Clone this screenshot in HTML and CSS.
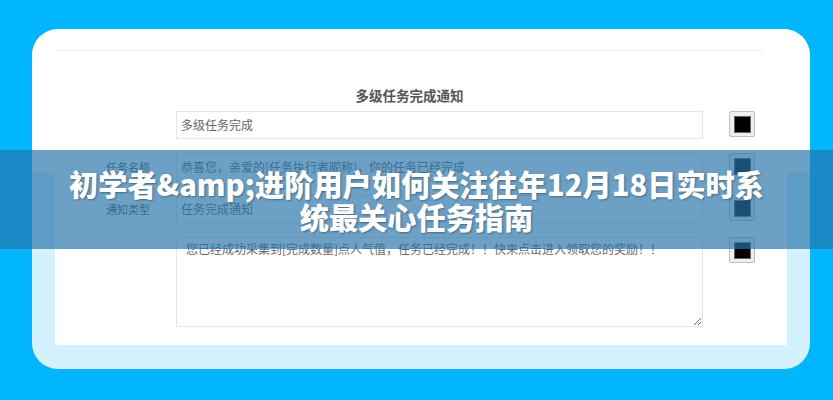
FILE: index.html
```html
<!DOCTYPE html>
<html lang="zh-CN">
<head>
<meta charset="utf-8">
<title>多级任务完成通知</title>
<link rel="stylesheet" href="styles.css">
</head>
<body>
<div class="page">
  <div class="card">
    <div class="panel">
      <div class="head">
        <div class="rule"></div>
        <div class="title">多级任务完成通知</div>
      </div>
      <div class="form">
        <div class="label"></div>
        <div class="field">多级任务完成</div>
        <div class="swatch"><span class="chip"></span></div>

        <div class="label">任务名称</div>
        <div class="field">恭喜您，亲爱的[任务执行者昵称]，你的任务已经完成</div>
        <div class="swatch"><span class="chip"></span></div>

        <div class="label">通知类型</div>
        <div class="field">任务完成通知</div>
        <div class="swatch"><span class="chip"></span></div>

        <div class="label"></div>
        <textarea class="area" readonly>您已经成功采集到[完成数量]点人气值，任务已经完成！！快来点击进入领取您的奖励！！</textarea>
        <div class="swatch"><span class="chip"></span></div>
      </div>
    </div>
  </div>
  <div class="banner">
    <h1 class="headline">初学者&amp;amp;进阶用户如何关注往年12月18日实时系<br>统最关心任务指南</h1>
  </div>
</div>
</body>
</html>
```

FILE: styles.css
```css
html, body {
  margin: 0;
  padding: 0;
}
body {
  background: #02b6fd;
  font-family: "Noto Sans CJK SC", "Noto Sans", sans-serif;
  width: 833px;
  height: 400px;
  overflow: hidden;
}
.page {
  position: relative;
  width: 833px;
  height: 400px;
  padding-top: 29px;
  box-sizing: border-box;
}
.card {
  margin-left: 32px;
  width: 778px;
  height: 340px;
  border-radius: 26px;
  background: linear-gradient(#ffffff 0, #ffffff 144px, #d4f2fd 144px);
  overflow: hidden;
}
.panel {
  margin: 0 23px;
  height: 316px;
  background: #ffffff;
  padding-top: 21px;
  box-sizing: border-box;
}
.head {
  width: 707px;
  margin-left: 1px;
}
.rule {
  height: 1px;
  background: #eeeeee;
}
.title {
  margin-top: 34px;
  text-align: center;
  font-size: 13.5px;
  line-height: 20px;
  font-weight: bold;
  color: #555555;
}
.form {
  margin-top: 6px;
  display: grid;
  grid-template-columns: 95px 527px 26px;
  grid-template-rows: 28px 28px 28px 90px;
  column-gap: 26px;
  row-gap: 14px;
}
.label {
  text-align: right;
  font-size: 11px;
  line-height: 28px;
  color: #555555;
}
.field {
  border: 1px solid #e6e6e6;
  box-sizing: border-box;
  height: 28px;
  padding: 0 4px;
  font-size: 12px;
  line-height: 26px;
  color: #666666;
  white-space: nowrap;
  overflow: hidden;
}
.area {
  display: block;
  margin: 0;
  width: 527px;
  height: 90px;
  box-sizing: border-box;
  border: 1px solid #e6e6e6;
  border-radius: 0;
  padding: 2px 9px;
  font-family: "Noto Sans CJK SC", "Noto Sans", sans-serif;
  font-size: 12px;
  line-height: 18px;
  color: #666666;
  background: #ffffff;
  resize: both;
  outline: none;
}
.swatch {
  width: 26px;
  height: 26px;
  box-sizing: border-box;
  border: 1px solid #bdbdbd;
  border-radius: 2px;
  background: #eeeeee;
  display: flex;
  align-items: center;
  justify-content: center;
}
.chip {
  display: block;
  width: 17px;
  height: 17px;
  box-sizing: border-box;
  background: #000000;
  border: 1px solid #666666;
}
.banner {
  position: absolute;
  left: 0;
  right: 0;
  top: 150px;
  height: 99px;
  background: rgba(40, 115, 170, 0.68);
  display: flex;
  align-items: center;
  justify-content: center;
}
.headline {
  margin: 0;
  text-align: center;
  font-size: 29.2px;
  line-height: 33px;
  font-weight: 900;
  color: #ffffff;
  text-shadow: 1px 1px 2px rgba(0, 0, 0, 0.35);
  white-space: nowrap;
}
```
